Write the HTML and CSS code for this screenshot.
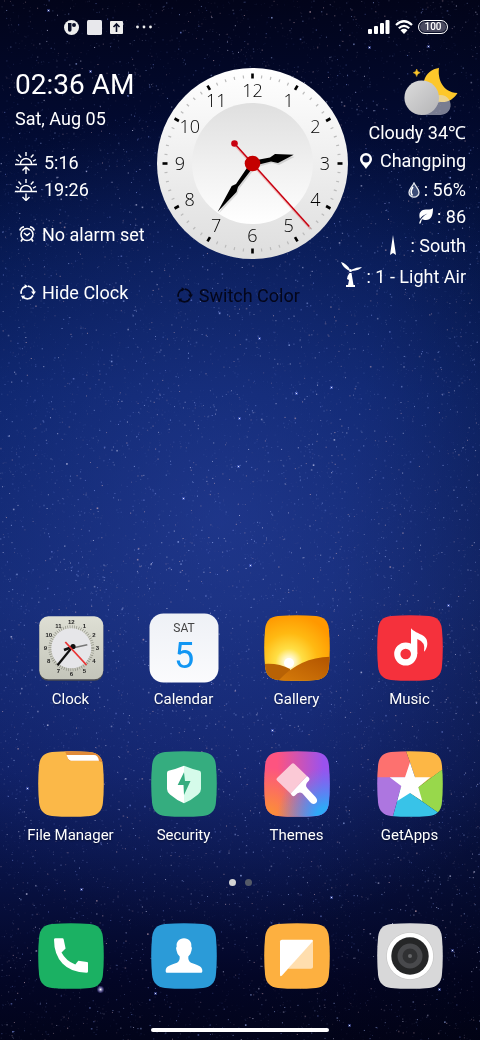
FILE: index.html
```html
<!DOCTYPE html>
<html lang="en">
<head>
  <meta charset="UTF-8">
  <meta name="viewport" content="width=device-width, initial-scale=1">
  <title>Home Screen</title>
  <link rel="stylesheet" href="styles.css">
</head>
<body>
  <canvas id="stars"></canvas>

  <!-- shared shapes -->
  <svg class="defs" width="0" height="0" aria-hidden="true">
    <defs>
      <clipPath id="squircle">
        <path d="M14 1.100Q33-.7 52 1.100C60 2 64 6 64.900 14Q66.700 33 64.900 52C64 60 60 64 52 64.900Q33 66.700 14 64.900C6 64 2 60 1.100 52Q-.7 33 1.100 14C2 6 6 2 14 1.100Z"/>
      </clipPath>
      <symbol id="refresh" viewBox="0 0 18 18">
        <g fill="none" stroke="currentColor" stroke-width="1.8">
          <path d="M2.4 10.500A6.700 6.700 0 0 1 6.500 2.800M9.500 2.300A6.700 6.700 0 0 1 15.600 8.500M14.800 12.200A6.700 6.700 0 0 1 4 13.500"/>
        </g>
        <path fill="currentColor" d="M12.800 8h5.200l-2.600 3.600zM2 12.500l4.500-.3-2.300 4zM6 .3l3.600 2-3.600 2.500z"/>
      </symbol>
    </defs>
  </svg>

  <header class="status">
    <div class="status-left">
      <svg width="15" height="15" viewBox="0 0 15 15"><circle cx="7.500" cy="7.500" r="7.500" fill="#eee"/><path d="M4 3h3.500v7a1.700 1.700 0 0 1-3.500 0z" fill="#0a0f28"/><circle cx="10" cy="5" r="2" fill="#0a0f28"/></svg>
      <svg width="15" height="15" viewBox="0 0 15 15"><rect width="15" height="15" rx="1.500" fill="#e8e8ec"/></svg>
      <svg width="13" height="13" viewBox="0 0 13 13"><rect width="13" height="13" rx="1" fill="#eee"/><path d="M6.500 11V3M3.500 6l3-3 3 3" fill="none" stroke="#0a0f28" stroke-width="1.600"/></svg>
      <svg width="18" height="4" viewBox="0 0 18 4" fill="#eee"><circle cx="2.500" cy="2" r="1.400"/><circle cx="9" cy="2" r="1.400"/><circle cx="15.500" cy="2" r="1.400"/></svg>
    </div>
    <div class="status-right">
      <svg width="22" height="14" viewBox="0 0 22 14" fill="#fff"><rect y="9" width="4" height="5" rx="1"/><rect x="6" y="6" width="4" height="8" rx="1"/><rect x="12" y="3" width="4" height="11" rx="1"/><rect x="17.500" width="4" height="14" rx="1"/></svg>
      <svg width="18" height="14" viewBox="0 0 18 14"><g fill="none" stroke="#fff" stroke-width="2.200"><path d="M1 5Q9-2.500 17 5"/><path d="M3.800 8.200Q9 3.500 14.200 8.200"/></g><path d="M9 14L5.500 10.200Q9 7.500 12.500 10.200z" fill="#fff"/></svg>
      <span class="battery">100</span>
    </div>
  </header>

  <section class="widget">
    <div class="info">
      <div class="time">02:36 AM</div>
      <div class="date">Sat, Aug 05</div>
      <div class="sun">
        <div class="line">
          <svg width="22" height="22" viewBox="0 0 22 22" fill="none" stroke="#fff" stroke-width="1.400"><path d="M0 12.500h22M5.500 12a5.500 5.500 0 0 1 11 0M11 0v4M3.500 2.500l2.700 3M18.500 2.500l-2.700 3M1 7.500l3 1.700M21 7.500l-3 1.700M11 22v-7M7.500 18.500l3.500-3.500 3.500 3.500"/></svg>
          5:16
        </div>
        <div class="line">
          <svg width="22" height="22" viewBox="0 0 22 22" fill="none" stroke="#fff" stroke-width="1.400"><path d="M0 12.500h22M5.500 12a5.500 5.500 0 0 1 11 0M11 0v4M3.500 2.500l2.700 3M18.500 2.500l-2.700 3M1 7.500l3 1.700M21 7.500l-3 1.700M11 14.500v6.500M7.500 18l3.500 3.500 3.500-3.500"/></svg>
          19:26
        </div>
      </div>
      <div class="alarm">
        <svg width="16" height="16" viewBox="0 0 16 16" fill="none" stroke="#fff" stroke-width="1.600"><circle cx="8" cy="8.500" r="6"/><path d="M5 7l3 2.500L11 7M3.500 13L2 15.500M12.500 13l1.500 2.500M.8 4.500Q1.500 1.500 5 .8M15.200 4.500Q14.500 1.500 11 .8"/></svg>
        No alarm set
      </div>
      <button class="action"><svg width="17" height="17"><use href="#refresh"/></svg>Hide Clock</button>
    </div>

    <div class="clock">
      <svg viewBox="0 0 191 191" role="img" aria-label="02:36">
        <defs>
          <linearGradient id="rim" x2="0" y2="1"><stop offset="0" stop-color="#fff"/><stop offset="1" stop-color="#dedede"/></linearGradient>
          <linearGradient id="dial" x2="0" y2="1"><stop offset="0" stop-color="#dfdfdf"/><stop offset=".5" stop-color="#f0f0f0"/><stop offset="1" stop-color="#fff"/></linearGradient>
        </defs>
        <circle cx="95.500" cy="95.500" r="95.500" fill="url(#rim)"/>
        <circle cx="95.500" cy="95.500" r="60.500" fill="url(#dial)"/>
        <g id="ticks"></g>
        <g id="numbers" class="numbers"></g>
        <g fill="#000" opacity=".12" transform="translate(1 2)">
          <path d="M95 94L113 89.500 118 86 136.700 86.800 121 95 114 93 96 98Z"/>
          <path d="M94 94L79 116 74.700 118 60.700 143.800 79.500 124 81 119 98 97Z"/>
        </g>
        <path d="M78.500 78L153.500 161" stroke="#d00" stroke-width="2" opacity=".2"/>
        <path d="M95 93L113 89.500 118 86 136.700 86.800 121 95 114 93.500 96 98Z"/>
        <path d="M94 94L79 116 74.700 118 60.700 143.800 79.500 124 81 119 98 97Z"/>
        <path d="M77.500 75.500L152.300 158.500" stroke="#c80010" stroke-width="1.500"/>
        <circle cx="77.500" cy="75.500" r="3.300" fill="#c80010"/>
        <circle cx="95.500" cy="95.500" r="7.800" fill="#c40000"/>
      </svg>
      <button class="action switch"><svg width="17" height="17"><use href="#refresh"/></svg>Switch Color</button>
    </div>

    <div class="weather">
      <svg class="sky" width="54" height="48" viewBox="0 0 54 48">
        <defs><linearGradient id="cloud" x2="1" y2="1"><stop offset="0" stop-color="#dcdcdc"/><stop offset="1" stop-color="#b4b4b6"/></linearGradient></defs>
        <path d="M35 0C33.500 10 38 24.500 53.500 25C50 31 44 34.500 37 34C24 33 17 24 20 13C22 5 28 1 35 0Z" fill="#fdc72b"/>
        <path d="M12.700 1Q13.200 4.200 16.200 4.700Q13.200 5.200 12.700 8.500Q12.200 5.200 9.200 4.700Q12.200 4.200 12.700 1Z" fill="#fdc72b" stroke="#fdc72b" stroke-width=".5"/>
        <path d="M18 47H36.700A10 10 0 1 0 30 29.500Z" fill="#dcdde6" opacity=".55"/>
        <circle cx="17.700" cy="29.700" r="17.300" fill="url(#cloud)"/>
      </svg>
      <div class="row">Cloudy 34℃</div>
      <div class="row place">
        <svg width="12" height="16" viewBox="0 0 12 16"><path fill-rule="evenodd" fill="#fff" d="M6 0a6 6 0 0 1 6 6c0 4-4 6.500-6 10-2-3.500-6-6-6-10a6 6 0 0 1 6-6zM6 2.500a3.500 3.500 0 1 0 0 7 3.500 3.500 0 0 0 0-7z"/></svg>
        Changping
      </div>
      <div class="row">
        <svg width="12" height="16" viewBox="0 0 12 16"><path d="M6 1C8 5 11 7 11 10.500a5 4.700 0 0 1-10 0C1 7 4 5 6 1z" fill="#7486ad" fill-opacity=".5" stroke="#e6e8ee" stroke-width="1.300"/><path d="M5 5C3 8 2.500 11 4.500 13.500" stroke="#fff" stroke-width="1.500" fill="none"/></svg>
        : 56%
      </div>
      <div class="row air">
        <svg width="14" height="16" viewBox="0 0 14 16"><path d="M14 0C14 8 12 12 7 12C5 12 4 11.500 3 11.200L1.500 15.500 0 15.500C1 11.500 4 8 8.500 5.500C4.500 7 2 9 1 11C-1.500 3 4 1.500 8 1.500C11 1.500 13 1 14 0z" fill="#fff"/></svg>
        : 86
      </div>
      <div class="row heading">
        <svg width="6" height="20" viewBox="0 0 6 20"><path d="M3 0L6 20 3 18 0 20z" fill="#fff"/></svg>
        : South
      </div>
      <div class="row wind">
        <svg width="21" height="25" viewBox="0 0 21 25" fill="#fff"><path d="M0 0Q5.500 1.500 9 7.500L7.500 8.500Q2 5.500 0 0zM21 5Q18.500 8.500 11 9L11 7.500Q15 5 21 5z"/><circle cx="9.500" cy="8.500" r="1.500"/><path d="M8.500 11Q6 14 6 17L8 18 7 23H5v2h9v-2h-1.500L10.500 11z"/></svg>
        : 1 - Light Air
      </div>
    </div>
  </section>

  <main class="apps">
    <a class="app" href="#clock">
      <svg viewBox="0 0 66 66">
        <defs><linearGradient id="plate" x2="0" y2="1"><stop offset="0" stop-color="#dedfd4"/><stop offset="1" stop-color="#c4c5ba"/></linearGradient></defs>
        <rect x="1.300" y="2.300" width="64" height="63.500" rx="9" fill="#4a4b50"/>
        <rect x="1.300" y="1.300" width="64" height="63" rx="9" fill="url(#plate)"/>
        <circle cx="33.300" cy="33.300" r="20" fill="#e6e6e9"/>
        <circle cx="33.300" cy="33.300" r="21.500" fill="none" stroke="#77786f" stroke-width="3" stroke-dasharray=".5 1.752"/>
        <g id="small-numbers" class="small-numbers"></g>
        <path d="M26 35l8-3" stroke="#111" stroke-width="2.500"/>
        <path d="M33.300 33.300l16-3.600" stroke="#777" stroke-width="1.500"/>
        <path d="M36 30L19.500 50.300" stroke="#111" stroke-width="2.200"/>
        <circle cx="35" cy="31.500" r="2.600" fill="#111"/>
        <path d="M27.300 27L48.500 50" stroke="#e93434" stroke-width="1.800"/>
      </svg>
      <span>Clock</span>
    </a>
    <a class="app" href="#calendar">
      <svg viewBox="0 0 66 66">
        <defs><linearGradient id="page" x2="0" y2="1"><stop offset="0" stop-color="#eef1f6"/><stop offset="1" stop-color="#fbfbfd"/></linearGradient></defs>
        <rect x="-1.500" y="-1.500" width="69" height="69" rx="14" fill="url(#page)"/>
        <text class="cal-week" x="33" y="17">SAT</text>
        <text class="cal-day" x="33" y="53">5</text>
      </svg>
      <span>Calendar</span>
    </a>
    <a class="app" href="#gallery">
      <svg viewBox="0 0 66 66">
        <defs>
          <radialGradient id="sunset" gradientUnits="userSpaceOnUse" cx="25" cy="47" r="48"><stop offset="0" stop-color="#fff"/><stop offset=".12" stop-color="#fff6c0"/><stop offset=".28" stop-color="#ffdf45"/><stop offset=".6" stop-color="#ffb912"/><stop offset="1" stop-color="#ff9800"/></radialGradient>
          <linearGradient id="hill" x1="1" x2="0" y2="1"><stop offset="0" stop-color="#b25400"/><stop offset="1" stop-color="#d67c0a"/></linearGradient>
        </defs>
        <g clip-path="url(#squircle)">
          <path fill="url(#sunset)" d="M0 0h66v66H0z"/>
          <circle cx="25" cy="48" r="5" fill="#fff"/>
          <path d="M0 49Q15 48 26 54V66H0z" fill="#b86205"/>
          <path d="M14 66Q36 42 66 41.700V66z" fill="url(#hill)"/>
        </g>
      </svg>
      <span>Gallery</span>
    </a>
    <a class="app" href="#music">
      <svg viewBox="0 0 66 66">
        <path clip-path="url(#squircle)" fill="#f5313c" d="M0 0h66v66H0z"/>
        <circle cx="28.700" cy="39" r="8.400" fill="none" stroke="#fff" stroke-width="6.200"/>
        <path d="M34 13.300C40 20 51 19 50.300 29Q50 34 47 36.700Q49 27 40.300 24V39H34z" fill="#fff"/>
      </svg>
      <span>Music</span>
    </a>
    <a class="app" href="#files">
      <svg viewBox="0 0 66 66">
        <g clip-path="url(#squircle)">
          <path fill="#fbb848" d="M0 0h66v66H0z"/>
          <path d="M26 0H66V12L60 9.700H32Q30 9 29 5Q28 1 26 0z" fill="#e08a38"/>
          <path d="M28.500 4H56Q60 4 61 9.700H33Q31 9.500 30 7.500z" fill="#fff"/>
        </g>
      </svg>
      <span>File Manager</span>
    </a>
    <a class="app" href="#security">
      <svg viewBox="0 0 66 66">
        <path clip-path="url(#squircle)" fill="#35ad7f" d="M0 0h66v66H0z"/>
        <path d="M33 14.700Q25 18 17.500 19.700Q16 20 16 22V38Q16 41 19 43.500Q26 49.500 33 52.300z" fill="#fff"/>
        <path d="M33 14.700Q41 18 48.500 19.700Q50 20 50 22V38Q50 41 47 43.500Q40 49.500 33 52.300z" fill="#d5fbea"/>
        <path d="M33 21.300L26.700 34H32.500L33 44 39.500 30H34z" fill="#35ad7f"/>
      </svg>
      <span>Security</span>
    </a>
    <a class="app" href="#themes">
      <svg viewBox="0 0 66 66">
        <defs>
          <linearGradient id="pinks" x2="1" y2="0"><stop offset=".2" stop-color="#fd5480"/><stop offset=".9" stop-color="#9a52ee"/></linearGradient>
          <radialGradient id="orange" cx=".05" cy="1" r=".75"><stop offset=".1" stop-color="#fb8f37"/><stop offset="1" stop-color="#fb8f37" stop-opacity="0"/></radialGradient>
          <radialGradient id="blue" cx=".95" cy="1" r=".75"><stop offset=".2" stop-color="#2fa9f6"/><stop offset="1" stop-color="#4a8af6" stop-opacity="0"/></radialGradient>
        </defs>
        <g clip-path="url(#squircle)">
          <path fill="url(#pinks)" d="M0 0h66v66H0z"/>
          <path fill="url(#orange)" d="M0 0h66v66H0z"/>
          <path fill="url(#blue)" d="M0 0h66v66H0z"/>
        </g>
        <path d="M27.500 13Q29 11.500 30.500 13L43 25 26.500 42.500 13 29.500Q11.800 28.300 13 27z" fill="#fbc9d6"/>
        <path d="M43 25L45 26.800Q46 28 45 29.500Q40 34 43.500 37.500L51.500 46Q54.500 49.500 52 52Q49 54.500 46 51L38.500 42.500Q35 39.500 31 44.500Q29.500 46 28 44.500L26.500 42.500z" fill="#fff"/>
      </svg>
      <span>Themes</span>
    </a>
    <a class="app" href="#getapps">
      <svg viewBox="0 0 66 66">
        <g clip-path="url(#squircle)">
          <path d="M0 0H29L33 11.300V42L0 26.300z" fill="#fd716f"/>
          <path d="M29 0H66V18.300L41.300 36.300 33 11.300z" fill="#fdb745"/>
          <path d="M66 18V65L62 62.300 33 42 41.300 36.300z" fill="#98d84b"/>
          <path d="M62 62.300L66 66H15.700L24.300 35 33 42z" fill="#38c3e8"/>
          <path d="M0 26.300H28L24.300 35 15.700 66H0z" fill="#ad76e0"/>
        </g>
        <path d="M33 11.300L38 26.300H53.300L41.300 36.300 45.300 50 33 42 20.300 50 24.300 35 12.700 26.300H28z" fill="#fff"/>
      </svg>
      <span>GetApps</span>
    </a>
  </main>

  <div class="pages"><i class="current"></i><i></i></div>

  <nav class="dock">
    <a class="app" href="#phone" aria-label="Phone">
      <svg viewBox="0 0 66 66">
        <path clip-path="url(#squircle)" fill="#1bb163" d="M0 0h66v66H0z"/>
        <path d="M16 16.500Q16 15.300 17.500 15.300H24.500Q25.500 15.300 25.700 16.500L27.600 25.500 23.500 29.500Q28 38 37.300 41.500L40.300 37.700 49 39Q50 39.200 50 40V48.500Q50 49.800 48.500 49.800Q33 49.500 24.500 40.500Q16 31.500 16 16.500z" fill="#fff"/>
      </svg>
    </a>
    <a class="app" href="#contacts" aria-label="Contacts">
      <svg viewBox="0 0 66 66">
        <path clip-path="url(#squircle)" fill="#2b9bd8" d="M0 0h66v66H0z"/>
        <path d="M33 15.300C38 15.300 41 19 40.300 23.500Q41.500 24.500 40.500 27.500Q40 31 37.300 33.500Q37 38 40 39.700C46 42 51 43 51.300 47V48.500Q51.300 49.700 50 49.700H16Q14.700 49.700 14.700 48.500V47C15 43 20 42 26 39.700Q29 38 28.700 33.500Q26 31 25.500 27.500Q24.500 24.500 25.700 23.500C25 19 28 15.300 33 15.300z" fill="#fff"/>
      </svg>
    </a>
    <a class="app" href="#notes" aria-label="Notes">
      <svg viewBox="0 0 66 66">
        <path clip-path="url(#squircle)" fill="#fdb040" d="M0 0h66v66H0z"/>
        <path d="M47 16.700Q49 16.700 49 19V44Q49 45.700 47 45.700H24z" fill="#ffdeae"/>
        <path d="M18 16.700H48Q49.500 17 48.500 18.500L18 52.500Q16 54 16 52V18.500Q16 16.700 18 16.700z" fill="#fff"/>
      </svg>
    </a>
    <a class="app" href="#camera" aria-label="Camera">
      <svg viewBox="0 0 66 66">
        <path clip-path="url(#squircle)" fill="#d8d8d9" d="M0 0h66v66H0z"/>
        <circle cx="33" cy="33" r="23.800" fill="#c4c4c4"/>
        <circle cx="33" cy="33" r="23.200" fill="#fff"/>
        <circle cx="33" cy="33" r="18.700" fill="#252627"/>
        <circle cx="33" cy="33" r="10" fill="#303133" stroke="#48494c" stroke-width="5"/>
        <circle cx="33" cy="33" r="2" fill="#66676a"/>
      </svg>
    </a>
  </nav>
  <div class="home-bar"></div>

  <script src="main.js"></script>
</body>
</html>
```

FILE: styles.css
```css
* {
  box-sizing: border-box;
}
body {
  margin: 0;
  min-height: 100vh;
  display: flex;
  flex-direction: column;
  font-family: Roboto, "Noto Sans", sans-serif;
  font-size: 18px;
  color: #fff;
  background:
    radial-gradient(ellipse 85% 40% at 46% 50%, rgba(42, 66, 158, 0.6), rgba(42, 66, 158, 0)),
    linear-gradient(100deg, rgba(0, 0, 10, 0) 65%, rgba(0, 0, 10, 0.35)),
    linear-gradient(#02041a 0%, #020a30 12%, #04164c 24%, #082064 38%, #10266e 58%, #0e1e62 74%, #081244 84%, #030626 94%, #02041a 100%);
}
#stars {
  position: absolute;
  top: 0;
  left: 0;
  width: 100%;
  height: 100%;
  z-index: -1;
}
.defs {
  position: absolute;
}
svg {
  flex: none;
}

/* status bar */
.status {
  height: 54px;
  padding: 0 32px 0 64px;
  display: flex;
  justify-content: space-between;
  align-items: center;
}
.status-left {
  display: flex;
  align-items: center;
  gap: 8px;
}
.status-left svg:last-child {
  margin-left: 4px;
}
.status-right {
  display: flex;
  align-items: center;
  gap: 5px;
}
.battery {
  width: 30px;
  height: 14px;
  border: 1px solid #fff;
  border-radius: 7px;
  background: #4a4a60;
  box-shadow: inset 0 0 0 1px #0a0f28;
  font-size: 10px;
  line-height: 12px;
  font-weight: 500;
  text-align: center;
}

/* clock widget */
.widget {
  padding: 14px 14px 0 15px;
  display: grid;
  grid-template-columns: minmax(0, 6fr) 191px minmax(0, 5fr);
  white-space: nowrap;
}
.time {
  font-size: 28px;
  line-height: 34px;
}
.date {
  margin-top: 5px;
  line-height: 24px;
}
.sun {
  margin-top: 18px;
}
.line {
  display: flex;
  align-items: center;
  gap: 7px;
  height: 27px;
}
.alarm, .action {
  display: flex;
  align-items: center;
  gap: 7px;
  height: 26px;
  padding: 0 0 0 4px;
}
.alarm {
  margin-top: 18px;
}
.action {
  margin-top: 32px;
  border: none;
  background: none;
  font: inherit;
  color: #fff;
  gap: 6px;
  cursor: pointer;
}
.clock > svg {
  display: block;
  width: 100%;
}
.switch {
  margin-top: 23px;
  padding-left: 19px;
  color: #04061a;
}
.numbers {
  font-family: "Open Sans", "Noto Sans", sans-serif;
  font-size: 18px;
  font-weight: 300;
  text-anchor: middle;
}
.weather {
  display: flex;
  flex-direction: column;
  align-items: flex-end;
}
.sky {
  margin: 0 8px 1px 0;
}
.row {
  display: flex;
  align-items: center;
  gap: 4px;
  height: 29px;
}
.place {
  gap: 8px;
}
.air {
  height: 24px;
}
.heading {
  height: 34px;
  gap: 14px;
}
.wind svg {
  align-self: flex-start;
}

/* app grid */
.apps, .dock {
  display: grid;
  grid-template-columns: repeat(4, 1fr);
  padding: 0 14px;
}
.apps {
  margin-top: auto;
  row-gap: 42px;
}
.app {
  display: flex;
  flex-direction: column;
  align-items: center;
  gap: 8px;
  color: #fff;
  font-size: 15px;
  line-height: 20px;
  text-decoration: none;
}
.app svg {
  width: 66px;
  height: 66px;
  overflow: visible;
}
.app span {
  text-shadow: 0 1px 2px rgba(0, 0, 0, 0.4);
}
.cal-week {
  font-size: 12px;
  fill: #444;
  text-anchor: middle;
}
.cal-day {
  font-size: 36px;
  fill: #1296f3;
  text-anchor: middle;
}
.small-numbers {
  font-family: "Liberation Sans", Arial, sans-serif;
  font-size: 6px;
  font-weight: bold;
  fill: #222;
  text-anchor: middle;
}
.pages {
  margin: 34px 0 37px;
  display: flex;
  justify-content: center;
  gap: 9px;
}
.pages i {
  width: 7px;
  height: 7px;
  border-radius: 50%;
  background: #555b68;
}
.pages .current {
  background: #d4d4d4;
}
.home-bar {
  width: 37%;
  height: 4px;
  margin: 39px auto 8px;
  border-radius: 2px;
  background: #fff;
}
```

FILE: main.js
```js
const SVG = 'http://www.w3.org/2000/svg';

function addNumbers(id, center, radius, drop) {
  const group = document.getElementById(id);
  for (let n = 1; n <= 12; n++) {
    const a = n * Math.PI / 6;
    const text = document.createElementNS(SVG, 'text');
    text.setAttribute('x', center + radius * Math.sin(a));
    text.setAttribute('y', center - radius * Math.cos(a) + drop);
    text.textContent = n;
    group.appendChild(text);
  }
}

function addTicks() {
  const group = document.getElementById('ticks');
  for (let i = 0; i < 60; i++) {
    const big = i % 5 === 0;
    const line = document.createElementNS(SVG, 'path');
    line.setAttribute('d', big ? 'M95.5 5.5v5' : 'M95.5 7v3');
    line.setAttribute('stroke', big ? '#000' : '#bbb');
    line.setAttribute('stroke-width', big ? 2.6 : 1.2);
    line.setAttribute('transform', `rotate(${i * 6} 95.5 95.5)`);
    group.appendChild(line);
  }
}

// fixed seed so the sky looks the same on every load
let seed = 7;
function rand() {
  seed = (seed * 16807) % 2147483647;
  return seed / 2147483647;
}

const bright = [
  [48, 10], [90, 71], [259, 338], [296, 393], [239, 418], [238, 466], [183, 498],
  [250, 565], [331, 387], [369, 47], [428, 46], [448, 605], [272, 730], [331, 897],
  [155, 993], [452, 950], [439, 989], [81, 889], [27, 788], [349, 1025]
];

function drawStars() {
  const canvas = document.getElementById('stars');
  const w = canvas.width = canvas.clientWidth;
  const h = canvas.height = canvas.clientHeight;
  const ctx = canvas.getContext('2d');
  const colors = ['170,190,255', '225,225,255', '130,150,235', '220,180,190'];
  const count = w * h / 38;
  for (let i = 0; i < count; i++) {
    const x = rand() * w;
    const y = rand() * h;
    const alpha = 0.07 + 0.6 * Math.pow(rand(), 4);
    ctx.fillStyle = `rgba(${colors[Math.floor(rand() * 4)]},${alpha})`;
    const size = rand() > 0.93 ? 1.6 : 1;
    ctx.fillRect(x, y, size, size);
  }
  for (const [x, y] of bright) {
    const sx = Math.round(x / 480 * w);
    const sy = Math.round(y / 1040 * h);
    ctx.fillStyle = 'rgba(120,140,255,0.35)';
    ctx.fillRect(sx - 1, sy - 1, 3, 3);
    ctx.fillStyle = '#dde4ff';
    ctx.fillRect(sx, sy, 1, 1);
  }
  // the brightest one, under the phone icon
  const gx = 100.5 / 480 * w;
  const gy = 989.5 / 1040 * h;
  const glow = ctx.createRadialGradient(gx, gy, 0, gx, gy, 4);
  glow.addColorStop(0, '#fff');
  glow.addColorStop(1, 'rgba(130,110,255,0)');
  ctx.fillStyle = glow;
  ctx.fillRect(gx - 4, gy - 4, 8, 8);
}

addTicks();
addNumbers('numbers', 95.5, 72.5, 6);
addNumbers('small-numbers', 33.3, 26, 2);
drawStars();
```
